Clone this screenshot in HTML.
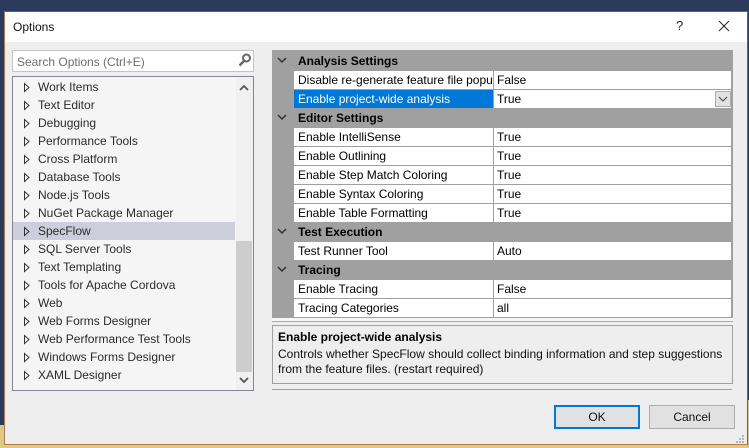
<!DOCTYPE html>
<html><head><meta charset="utf-8"><style>
html,body{margin:0;padding:0;width:749px;height:448px;overflow:hidden;background:#2b3b5c}
body{position:relative;font-family:"Liberation Sans",sans-serif;font-size:12px;color:#1e1e1e}
.a{position:absolute;white-space:nowrap}
.r{position:absolute;left:294px;width:199px;height:18px;background:#fff;line-height:19px;color:#000;overflow:hidden;white-space:nowrap;padding-left:4px;box-sizing:border-box}
.v{position:absolute;left:494px;width:237px;height:18px;background:#fff;line-height:19px;color:#000;padding-left:3px;box-sizing:border-box}
.h{position:absolute;left:298px;font-weight:bold;color:#000;line-height:18px}
.t{position:absolute;left:38px;color:#2b2b2b;line-height:18px;white-space:nowrap}
</style></head><body>
<div class="a" style="left:0;top:425px;width:5px;height:23px;background:#dccb80"></div>
<div class="a" style="left:0;top:445px;width:749px;height:3px;background:#dccb80"></div>
<div class="a" style="left:747px;top:400px;width:2px;height:48px;background:#d8c690"></div>
<div class="a" style="left:4px;top:11px;width:744px;height:434px;background:#eeeeef;border:1px solid #6e5a50;border-left-color:#b07a58;border-bottom-color:#c07a4a;border-right-color:#7a5e4c;box-sizing:border-box"></div>
<div class="a" style="left:5px;top:12px;width:742px;height:30px;background:#fff"></div>
<div class="a" style="left:13px;top:19px;font-size:12px;color:#111;line-height:16px">Options</div>
<div class="a" style="left:676px;top:18px;font-size:13px;color:#222;line-height:16px">?</div>
<svg class="a" style="left:718px;top:20px" width="12" height="12"><path d="M1 1L11 11M11 1L1 11" stroke="#222" stroke-width="1" fill="none"/></svg>

<div class="a" style="left:12px;top:50px;width:242px;height:22px;background:#fff;border:1px solid #c4c4c4;box-sizing:border-box"></div>
<div class="a" style="left:17px;top:54px;color:#6d6d6d;line-height:16px">Search Options (Ctrl+E)</div>
<svg class="a" style="left:237px;top:52px" width="16" height="16"><circle cx="9.500" cy="6" r="3.500" fill="none" stroke="#666" stroke-width="2"/><path d="M7 9L2.500 13.500" stroke="#666" stroke-width="2.400"/></svg>

<div class="a" style="left:12px;top:76px;width:242px;height:315px;background:#f5f5f5;border:1px solid #828790;box-sizing:border-box"></div>
<div class="a" style="left:236px;top:77px;width:17px;height:313px;background:#f0f0f0"></div>
<div class="a" style="left:236px;top:241px;width:16px;height:131px;background:#cdcdcd"></div>
<svg class="a" style="left:239px;top:84px" width="10" height="8"><path d="M1 6L5 2L9 6" stroke="#555" stroke-width="1.800" fill="none"/></svg>
<svg class="a" style="left:239px;top:376px" width="10" height="8"><path d="M1 2L5 6L9 2" stroke="#555" stroke-width="1.800" fill="none"/></svg>
<div class="a" style="left:13px;top:222px;width:222px;height:18px;background:#cccedb"></div>

<svg class="a" style="left:23px;top:82px" width="8" height="300" fill="none" stroke="#333"><path d="M1.500 1.500L6 5.500L1.500 9.500Z"/><path d="M1.500 19.500L6 23.500L1.500 27.500Z"/><path d="M1.500 37.500L6 41.500L1.500 45.500Z"/><path d="M1.500 55.500L6 59.500L1.500 63.500Z"/><path d="M1.500 73.500L6 77.500L1.500 81.500Z"/><path d="M1.500 91.500L6 95.500L1.500 99.500Z"/><path d="M1.500 109.500L6 113.500L1.500 117.500Z"/><path d="M1.500 127.500L6 131.500L1.500 135.500Z"/><path d="M1.500 145.500L6 149.500L1.500 153.500Z"/><path d="M1.500 163.500L6 167.500L1.500 171.500Z"/><path d="M1.500 181.500L6 185.500L1.500 189.500Z"/><path d="M1.500 199.500L6 203.500L1.500 207.500Z"/><path d="M1.500 217.500L6 221.500L1.500 225.500Z"/><path d="M1.500 235.500L6 239.500L1.500 243.500Z"/><path d="M1.500 253.500L6 257.500L1.500 261.500Z"/><path d="M1.500 271.500L6 275.500L1.500 279.500Z"/><path d="M1.500 289.500L6 293.500L1.500 297.500Z"/></svg>

<div class="t" style="top:78px">Work Items</div>
<div class="t" style="top:96px">Text Editor</div>
<div class="t" style="top:114px">Debugging</div>
<div class="t" style="top:132px">Performance Tools</div>
<div class="t" style="top:150px">Cross Platform</div>
<div class="t" style="top:168px">Database Tools</div>
<div class="t" style="top:186px">Node.js Tools</div>
<div class="t" style="top:204px">NuGet Package Manager</div>
<div class="t" style="top:222px">SpecFlow</div>
<div class="t" style="top:240px">SQL Server Tools</div>
<div class="t" style="top:258px">Text Templating</div>
<div class="t" style="top:276px">Tools for Apache Cordova</div>
<div class="t" style="top:294px">Web</div>
<div class="t" style="top:312px">Web Forms Designer</div>
<div class="t" style="top:330px">Web Performance Test Tools</div>
<div class="t" style="top:348px">Windows Forms Designer</div>
<div class="t" style="top:366px">XAML Designer</div>

<div class="a" style="left:272px;top:50px;width:461px;height:268px;background:#a0a0a0"></div>
<div class="a" style="left:272px;top:318px;width:461px;height:3px;background:#f7f7f7"></div>
<div class="a" style="left:272px;top:321px;width:461px;height:1px;background:#a8a8a8"></div>

<div class="h" style="top:52px">Analysis Settings</div>
<div class="r" style="top:71px">Disable re-generate feature file popup</div><div class="v" style="top:71px">False</div>
<div class="r" style="top:90px;background:#0078d7;color:#fff">Enable project-wide analysis</div><div class="v" style="top:90px">True</div>
<div class="a" style="left:715px;top:91px;width:16px;height:16px;background:#e1e1e1;border:1px solid #adadad;box-sizing:border-box"></div>
<svg class="a" style="left:718px;top:96px" width="10" height="7"><path d="M1 1L5 5L9 1" stroke="#444" fill="none"/></svg>
<div class="h" style="top:109px">Editor Settings</div>
<div class="r" style="top:128px">Enable IntelliSense</div><div class="v" style="top:128px">True</div>
<div class="r" style="top:147px">Enable Outlining</div><div class="v" style="top:147px">True</div>
<div class="r" style="top:166px">Enable Step Match Coloring</div><div class="v" style="top:166px">True</div>
<div class="r" style="top:185px">Enable Syntax Coloring</div><div class="v" style="top:185px">True</div>
<div class="r" style="top:204px">Enable Table Formatting</div><div class="v" style="top:204px">True</div>
<div class="h" style="top:223px">Test Execution</div>
<div class="r" style="top:242px">Test Runner Tool</div><div class="v" style="top:242px">Auto</div>
<div class="h" style="top:261px">Tracing</div>
<div class="r" style="top:280px">Enable Tracing</div><div class="v" style="top:280px">False</div>
<div class="r" style="top:299px">Tracing Categories</div><div class="v" style="top:299px">all</div>

<svg class="a" style="left:277px;top:57px" width="14" height="220" fill="none" stroke="#333" stroke-width="1.500"><path d="M1 1L5 5L9 1"/><path d="M1 58L5 62L9 58"/><path d="M1 172L5 176L9 172"/><path d="M1 210L5 214L9 210"/></svg>

<div class="a" style="left:272px;top:325px;width:461px;height:59px;border:1px solid #a0a0a0;box-sizing:border-box"></div>
<div class="a" style="left:278px;top:329px;font-weight:bold;color:#000;line-height:16px">Enable project-wide analysis</div>
<div class="a" style="left:278px;top:346px;color:#111;line-height:16px">Controls whether SpecFlow should collect binding information and step suggestions</div>
<div class="a" style="left:278px;top:361px;color:#111;line-height:16px">from the feature files. (restart required)</div>
<div class="a" style="left:272px;top:389px;width:460px;height:1px;background:#a0a0a0"></div>

<div class="a" style="left:554px;top:405px;width:86px;height:24px;background:#e1e1e1;border:2px solid #0078d7;box-sizing:border-box;text-align:center;line-height:20px;color:#111">OK</div>
<div class="a" style="left:649px;top:405px;width:86px;height:24px;background:#e1e1e1;border:1px solid #adadad;box-sizing:border-box;text-align:center;line-height:22px;color:#111">Cancel</div>
<svg class="a" style="left:735px;top:434px" width="10" height="10" fill="#b5b5b5"><rect x="7" y="1" width="2" height="2"/><rect x="4" y="4" width="2" height="2"/><rect x="7" y="4" width="2" height="2"/><rect x="1" y="7" width="2" height="2"/><rect x="4" y="7" width="2" height="2"/><rect x="7" y="7" width="2" height="2"/></svg>
</body></html>
